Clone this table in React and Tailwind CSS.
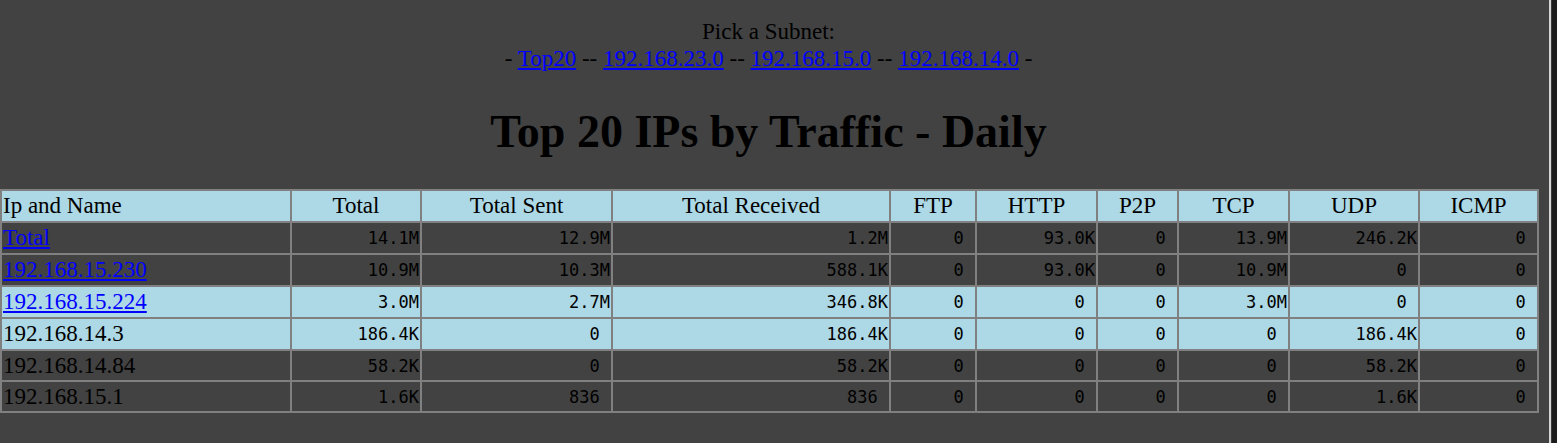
import React from 'react';

const cols = [
  { label: 'Ip and Name', w: 'w-[290px]', left: true },
  { label: 'Total', w: 'w-[130px]' },
  { label: 'Total Sent', w: 'w-[191px]' },
  { label: 'Total Received', w: 'w-[278px]' },
  { label: 'FTP', w: 'w-[86px]' },
  { label: 'HTTP', w: 'w-[121px]' },
  { label: 'P2P', w: 'w-[81px]' },
  { label: 'TCP', w: 'w-[111px]' },
  { label: 'UDP', w: 'w-[130px]' },
  { label: 'ICMP', w: 'w-[119px]' },
];

const Z = '0\u00a0';

const rows = [
  { name: 'Total', link: true, light: false, h: 'h-[32px]', vals: ['14.1M', '12.9M', '1.2M', Z, '93.0K', Z, '13.9M', '246.2K', Z] },
  { name: '192.168.15.230', link: true, light: false, h: 'h-[32px]', vals: ['10.9M', '10.3M', '588.1K', Z, '93.0K', Z, '10.9M', Z, Z] },
  { name: '192.168.15.224', link: true, light: true, h: 'h-[32px]', vals: ['3.0M', '2.7M', '346.8K', Z, Z, Z, '3.0M', Z, Z] },
  { name: '192.168.14.3', link: false, light: true, h: 'h-[32px]', vals: ['186.4K', Z, '186.4K', Z, Z, Z, Z, '186.4K', Z] },
  { name: '192.168.14.84', link: false, light: false, h: 'h-[31px]', vals: ['58.2K', Z, '58.2K', Z, Z, Z, Z, '58.2K', Z] },
  { name: '192.168.15.1', link: false, light: false, h: 'h-[31px]', vals: ['1.6K', '836\u00a0', '836\u00a0', Z, Z, Z, Z, '1.6K', Z] },
];

const subnets = ['Top20', '192.168.23.0', '192.168.15.0', '192.168.14.0'];

export default function App() {
  return (
    <div className="flex h-[443px] w-[1557px] overflow-hidden bg-[#424242] font-['Liberation_Serif',serif] text-black">
      <div className="w-[1549px]">
        {/* subnet picker */}
        <div className="w-[1537px] pt-[18px] text-center text-[23px] leading-[27px]">
          <div>Pick a Subnet:</div>
          <div>
            -{' '}
            {subnets.map((s, i) => (
              <React.Fragment key={s}>
                <a href="#" className="text-[#0000ff] underline">
                  {s}
                </a>
                {i < subnets.length - 1 ? ' -- ' : ' -'}
              </React.Fragment>
            ))}
          </div>
        </div>

        <h1 className="mt-[33px] mb-[31px] w-[1537px] text-center text-[46px] font-bold leading-[53px]">
          Top 20 IPs by Traffic - Daily
        </h1>

        <table className="w-[1537px] table-fixed border-separate border-spacing-0 border border-[#808080] text-[23px]">
          <thead>
            <tr className="h-[32px] bg-[#add8e6]">
              {cols.map((c) => (
                <th
                  key={c.label}
                  className={`${c.w} border border-[#808080] px-px font-normal leading-[26px] ${c.left ? 'text-left' : 'text-center'}`}
                >
                  {c.label}
                </th>
              ))}
            </tr>
          </thead>
          <tbody>
            {rows.map((r) => (
              <tr key={r.name} className={`${r.h} ${r.light ? 'bg-[#add8e6]' : 'bg-[#424242]'}`}>
                <td className="border border-[#808080] px-px leading-[26px]">
                  {r.link ? (
                    <a href="#" className="text-[#0000ff] underline">
                      {r.name}
                    </a>
                  ) : (
                    r.name
                  )}
                </td>
                {r.vals.map((v, i) => (
                  <td
                    key={i}
                    className="border border-[#808080] px-px text-right font-['DejaVu_Sans_Mono',monospace] text-[17px] leading-[20px]"
                  >
                    {v}
                  </td>
                ))}
              </tr>
            ))}
          </tbody>
        </table>
      </div>
      <div className="w-[2px] bg-[#d4d4d4]" />
      <div className="w-[1px] bg-[#3a3a3a]" />
      <div className="flex-1 bg-[#1c1c1c]" />
    </div>
  );
}
